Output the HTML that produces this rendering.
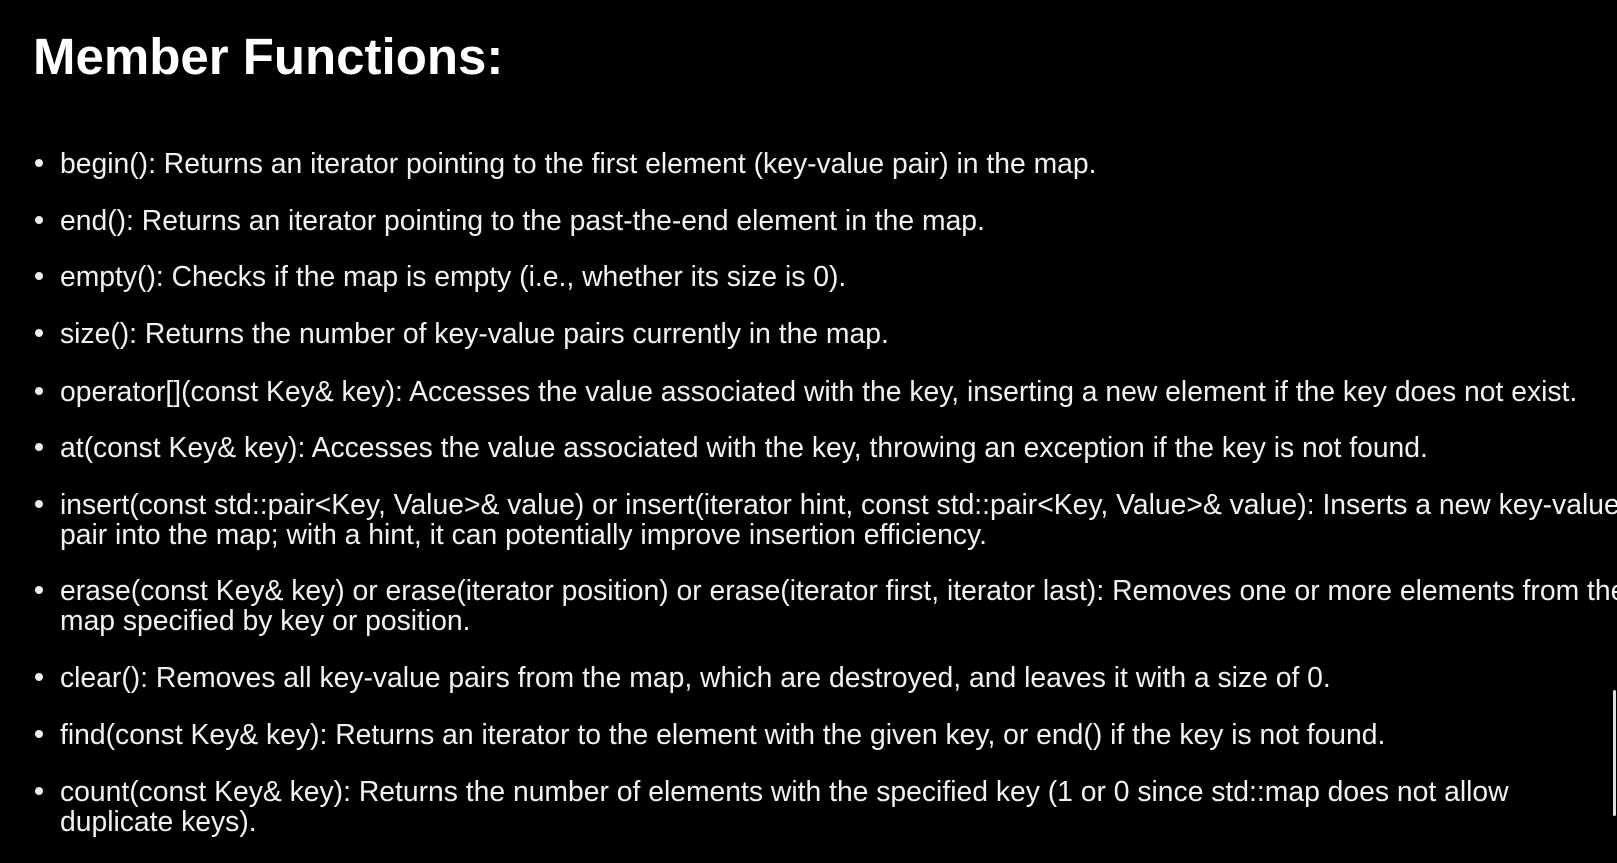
<!DOCTYPE html>
<html><head><meta charset="utf-8"><style>
html,body{margin:0;padding:0;background:#000;width:1617px;height:863px;overflow:hidden}
body{font-family:"Liberation Sans",Arial,sans-serif;color:#f2f2f2;position:relative}
h1{position:absolute;left:33px;top:27px;margin:0;font-size:51px;font-weight:bold;line-height:60px;color:#fff}
.i{position:absolute;left:60px;font-size:28.3px;line-height:30px;white-space:nowrap}
.i:before{content:"";position:absolute;left:-25px;top:11px;width:8px;height:8px;border-radius:50%;background:#eee}
.bar{position:absolute;left:1613px;top:690px;width:3px;height:126px;background:#ddd;border-radius:2px}
</style></head><body>
<h1>Member Functions:</h1>
<div class="i" style="top:148px">begin(): Returns an iterator pointing to the first element (key-value pair) in the map.</div>
<div class="i" style="top:205px">end(): Returns an iterator pointing to the past-the-end element in the map.</div>
<div class="i" style="top:261px">empty(): Checks if the map is empty (i.e., whether its size is 0).</div>
<div class="i" style="top:318px">size(): Returns the number of key-value pairs currently in the map.</div>
<div class="i" style="top:376px">operator[](const Key&amp; key): Accesses the value associated with the key, inserting a new element if the key does not exist.</div>
<div class="i" style="top:432px">at(const Key&amp; key): Accesses the value associated with the key, throwing an exception if the key is not found.</div>
<div class="i" style="top:489px">insert(const std::pair&lt;Key, Value&gt;&amp; value) or insert(iterator hint, const std::pair&lt;Key, Value&gt;&amp; value): Inserts a new key-value<br>pair into the map; with a hint, it can potentially improve insertion efficiency.</div>
<div class="i" style="top:575px">erase(const Key&amp; key) or erase(iterator position) or erase(iterator first, iterator last): Removes one or more elements from the<br>map specified by key or position.</div>
<div class="i" style="top:662px">clear(): Removes all key-value pairs from the map, which are destroyed, and leaves it with a size of 0.</div>
<div class="i" style="top:719px">find(const Key&amp; key): Returns an iterator to the element with the given key, or end() if the key is not found.</div>
<div class="i" style="top:776px">count(const Key&amp; key): Returns the number of elements with the specified key (1 or 0 since std::map does not allow<br>duplicate keys).</div>
<div class="bar"></div>
</body></html>
